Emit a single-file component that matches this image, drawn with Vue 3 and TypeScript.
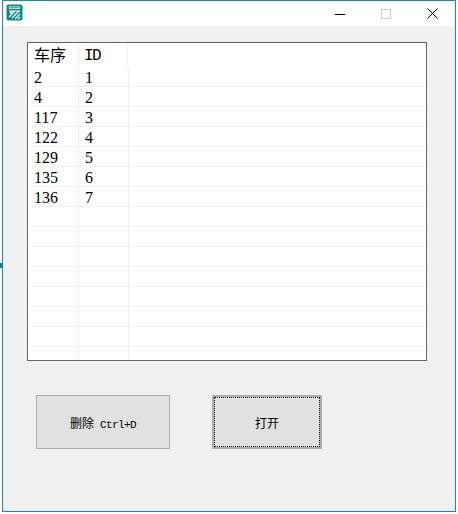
<template>
  <div class="screen">
    <span class="edge-mark"></span>
    <div class="window">
      <!-- title bar -->
      <div class="titlebar">
        <svg class="app-icon" width="17" height="17" viewBox="0 0 17 17">
          <rect x="0.5" y="0.5" width="16" height="16" rx="2" fill="#0b8a8a" />
          <rect x="3" y="2.5" width="11" height="2.5" fill="#fff" />
          <rect x="4" y="3.3" width="9" height="1" fill="#0b8a8a" />
          <path d="M3 7h11M4 9.5 7 7M3 13l6-6M6 14l7-7M9 15l5-5M12 15l2-2" stroke="#fff" stroke-width="1.2" fill="none" />
        </svg>
        <div class="controls">
          <span class="ctl">
            <svg width="10" height="10" viewBox="0 0 10 10"><path d="M0 5.5h10" stroke="#000" /></svg>
          </span>
          <span class="ctl">
            <svg width="10" height="10" viewBox="0 0 10 10"><rect x="0.5" y="0.5" width="9" height="9" fill="none" stroke="#ccc" /></svg>
          </span>
          <span class="ctl">
            <svg width="11" height="11" viewBox="0 0 11 11"><path d="M0.5 0.5l10 10M10.5 0.5l-10 10" stroke="#000" /></svg>
          </span>
        </div>
      </div>

      <!-- body -->
      <div class="body">
        <div class="grid">
          <div class="row row--head">
            <span class="cell cell--first cjk">车序</span>
            <span class="cell cell--second latin">ID</span>
            <span class="cell"></span>
          </div>
          <div v-for="(r, i) in rows" :key="i" class="row">
            <span class="cell cell--first">{{ r[0] }}</span>
            <span class="cell cell--second">{{ r[1] }}</span>
            <span class="cell"></span>
          </div>
        </div>

        <div class="actions">
          <button class="btn btn--delete"><span class="cjk-small">删除</span> Ctrl+D</button>
          <button class="btn btn--open"><span class="cjk-small">打开</span></button>
        </div>
      </div>
    </div>
  </div>
</template>

<script setup lang="ts">
const data: [string, string][] = [
  ['2', '1'],
  ['4', '2'],
  ['117', '3'],
  ['122', '4'],
  ['129', '5'],
  ['135', '6'],
  ['136', '7'],
]

// the grid is padded with empty rows down to its bottom edge
const rows: [string, string][] = [...data, ...Array(8).fill(['', ''])]
</script>

<style scoped>
.screen {
  position: relative;
  width: 458px;
  height: 514px;
  background: #fff;
  padding: 0 2px 2px 2px;
  box-sizing: border-box;
  overflow: hidden;
}
.edge-mark {
  position: absolute;
  left: 0;
  top: 263px;
  width: 2px;
  height: 5px;
  background: #0b7f7f;
}
.window {
  width: 454px;
  height: 512px;
  box-sizing: border-box;
  border: 1px solid #1883d7;
  background: #f0f0f0;
  display: flex;
  flex-direction: column;
}
.titlebar {
  height: 25px;
  background: #fff;
  display: flex;
  align-items: center;
  justify-content: space-between;
  padding-left: 3px;
  flex-shrink: 0;
}
.app-icon {
  display: block;
  margin-top: -3px;
}
.controls {
  display: flex;
  height: 100%;
}
.ctl {
  width: 46px;
  display: flex;
  align-items: center;
  justify-content: center;
}
.body {
  padding: 16px 0 0 24px;
}
.grid {
  width: 400px;
  height: 319px;
  box-sizing: border-box;
  border: 1px solid #646464;
  background: #fff;
  overflow: hidden;
}
.row {
  display: flex;
  height: 20px;
  box-sizing: border-box;
  border-bottom: 1px solid #f0f0f0;
  font-family: "Liberation Serif", serif;
  font-size: 16px;
  color: #000;
}
.row--head {
  height: 24px;
  border-bottom: none;
}
.cell {
  display: block;
  box-sizing: border-box;
  padding-left: 6px;
  line-height: 21px;
  border-right: 1px solid #f0f0f0;
}
.row--head .cell {
  line-height: 23px;
}
.row .cell:last-child {
  border-right: none;
  flex: 1;
}
.cell--first { width: 51px; }
.cell--second { width: 50px; }
.row--head .cell--second { width: 49px; }
.cjk {
  font-family: "Noto Sans CJK SC", sans-serif;
  font-size: 16px;
}
.row--head .latin {
  font-family: "Liberation Mono", monospace;
  font-size: 16px;
  letter-spacing: -1.6px;
  line-height: 26px;
  padding-left: 5px;
}
.actions {
  display: flex;
  margin-top: 34px;
  padding-left: 9px;
  gap: 42px;
}
.btn {
  position: relative;
  height: 54px;
  box-sizing: border-box;
  border: 1px solid #adadad;
  background: #e1e1e1;
  color: #000;
  font-family: "Liberation Mono", monospace;
  font-size: 11px;
  letter-spacing: -0.6px;
  padding: 0;
  white-space: pre;
}
.cjk-small {
  font-family: "Noto Sans CJK SC", sans-serif;
  font-size: 12px;
  letter-spacing: 0;
}
.btn--delete { width: 134px; }
.btn--open {
  width: 110px;
  border-width: 2px;
}
.btn--open::after {
  content: "";
  position: absolute;
  inset: 0;
  border: 1px dotted #000;
}
</style>

<style>
html, body { margin: 0; background: #fff; }
</style>
